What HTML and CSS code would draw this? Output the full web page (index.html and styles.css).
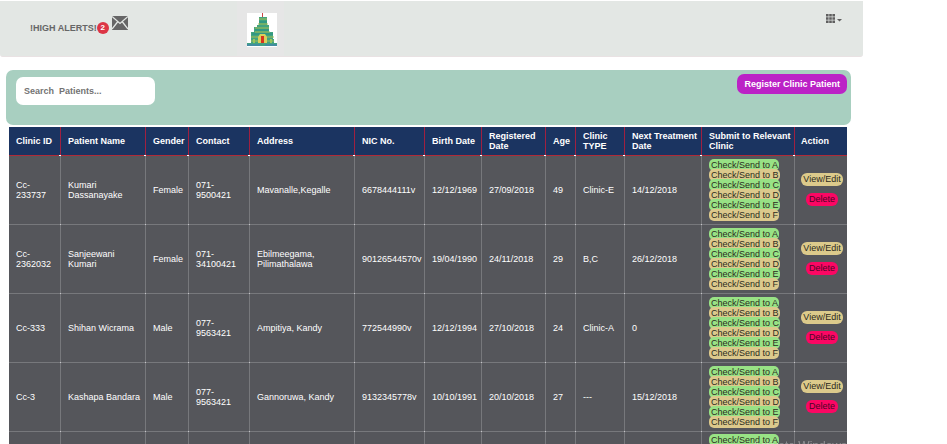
FILE: index.html
```html
<!DOCTYPE html>
<html lang="en">
<head>
<meta charset="utf-8">
<title>Clinic Patients</title>
<link rel="stylesheet" href="styles.css">
</head>
<body>
<header class="topbar">
  <a class="alerts" href="#alerts">
    <span>!HIGH ALERTS!</span><span class="badge">2</span>
    <svg class="mail" viewBox="0 0 16 14" aria-hidden="true">
      <path d="M0 0H16V14H0Z" fill="#666"/>
      <path d="M0 .5L8 7.5L16 .5M0 13L5.5 6M16 13L10.5 6" fill="none" stroke="#e3e7e4" stroke-width="1.3"/>
    </svg>
  </a>
  <a class="logo" href="#home" aria-label="Home">
    <svg viewBox="0 0 30 34" aria-hidden="true">
      <path d="M0 0H30V34H0Z" fill="#fff"/>
      <path d="M15 0H16V4H15Z" fill="#c44"/>
      <path d="M12 4H20V12H22V19H26V26H27V30H30V33H0V30H4V19H7V14H10V12H12Z" fill="#43a380"/>
      <path d="M12 6H20M11 11H21M8 15H22M8 19H23M4 24H27M4 28H27" stroke="#a5bd52" fill="none"/>
      <path d="M12 9H20M8 17H22M5 21H26" stroke="#238d87" fill="none"/>
      <path d="M11 30V24L13 21H18L20 24V30Z" fill="#d8d05b"/>
      <path d="M14 23H17V30H14Z" fill="#d9341d"/>
      <path d="M6 26H8V30H6ZM23 26H25V30H23Z" fill="#9ac55b"/>
      <path d="M0 31H13V33H0ZM18 31H30V33H18Z" fill="#438da0"/>
    </svg>
  </a>
  <button class="apps" type="button" aria-label="Apps">
    <svg viewBox="0 0 17 9" aria-hidden="true">
      <path d="M0 0H2.6V2.6H0ZM3.2 0H5.8V2.6H3.2ZM6.4 0H9V2.6H6.4ZM0 3.2H2.6V5.8H0ZM3.2 3.2H5.8V5.8H3.2ZM6.4 3.2H9V5.8H6.4ZM0 6.4H2.6V9H0ZM3.2 6.4H5.8V9H3.2ZM6.4 6.4H9V9H6.4ZM11 5H16L13.5 7.5Z" fill="#5f5f5f"/>
    </svg>
  </button>
</header>
<main>
  <section class="panel">
    <input class="search" type="text" placeholder="Search  Patients..." aria-label="Search patients">
    <button class="register" type="button">Register Clinic Patient</button>
  </section>
  <table class="patients">
    <colgroup>
      <col class="c-id"><col class="c-name"><col class="c-gender"><col class="c-contact"><col class="c-address"><col class="c-nic"><col class="c-birth"><col class="c-reg"><col class="c-age"><col class="c-type"><col class="c-next"><col class="c-submit"><col class="c-action">
    </colgroup>
    <thead>
      <tr><th>Clinic ID</th><th>Patient Name</th><th>Gender</th><th>Contact</th><th>Address</th><th>NIC No.</th><th>Birth Date</th><th>Registered Date</th><th>Age</th><th>Clinic TYPE</th><th>Next Treatment Date</th><th>Submit to Relevant Clinic</th><th>Action</th></tr>
    </thead>
    <tbody>
      <tr><td>Cc-<br>233737</td><td>Kumari Dassanayake</td><td>Female</td><td>071-<br>9500421</td><td>Mavanalle,Kegalle</td><td>6678444111v</td><td>12/12/1969</td><td>27/09/2018</td><td>49</td><td>Clinic-E</td><td>14/12/2018</td>
        <td><div class="chips"><button type="button">Check/Send to A</button><button type="button">Check/Send to B</button><button type="button">Check/Send to C</button><button type="button">Check/Send to D</button><button type="button">Check/Send to E</button><button type="button">Check/Send to F</button></div></td>
        <td><div class="actions"><button class="edit" type="button">View/Edit</button><button class="delete" type="button">Delete</button></div></td></tr>
      <tr><td>Cc-<br>2362032</td><td>Sanjeewani Kumari</td><td>Female</td><td>071-<br>34100421</td><td>Ebilmeegama, Pilimathalawa</td><td>90126544570v</td><td>19/04/1990</td><td>24/11/2018</td><td>29</td><td>B,C</td><td>26/12/2018</td>
        <td><div class="chips"><button type="button">Check/Send to A</button><button type="button">Check/Send to B</button><button type="button">Check/Send to C</button><button type="button">Check/Send to D</button><button type="button">Check/Send to E</button><button type="button">Check/Send to F</button></div></td>
        <td><div class="actions"><button class="edit" type="button">View/Edit</button><button class="delete" type="button">Delete</button></div></td></tr>
      <tr><td>Cc-333</td><td>Shihan Wicrama</td><td>Male</td><td>077-<br>9563421</td><td>Ampitiya, Kandy</td><td>772544990v</td><td>12/12/1994</td><td>27/10/2018</td><td>24</td><td>Clinic-A</td><td>0</td>
        <td><div class="chips"><button type="button">Check/Send to A</button><button type="button">Check/Send to B</button><button type="button">Check/Send to C</button><button type="button">Check/Send to D</button><button type="button">Check/Send to E</button><button type="button">Check/Send to F</button></div></td>
        <td><div class="actions"><button class="edit" type="button">View/Edit</button><button class="delete" type="button">Delete</button></div></td></tr>
      <tr><td>Cc-3</td><td>Kashapa Bandara</td><td>Male</td><td>077-<br>9563421</td><td>Gannoruwa, Kandy</td><td>9132345778v</td><td>10/10/1991</td><td>20/10/2018</td><td>27</td><td>---</td><td>15/12/2018</td>
        <td><div class="chips"><button type="button">Check/Send to A</button><button type="button">Check/Send to B</button><button type="button">Check/Send to C</button><button type="button">Check/Send to D</button><button type="button">Check/Send to E</button><button type="button">Check/Send to F</button></div></td>
        <td><div class="actions"><button class="edit" type="button">View/Edit</button><button class="delete" type="button">Delete</button></div></td></tr>
      <tr><td></td><td></td><td></td><td></td><td></td><td></td><td></td><td></td><td></td><td></td><td></td>
        <td><div class="chips"><button type="button">Check/Send to A</button></div></td>
        <td></td></tr>
    </tbody>
  </table>
</main>
<div class="watermark">Activate Windows</div>
</body>
</html>
```
FILE: styles.css
```css
* { box-sizing: border-box; }
html { scrollbar-width: none; }
body {
  margin: 0;
  background: #fff;
  font-family: "Liberation Sans", Arial, sans-serif;
  font-size: 9px;
  line-height: 10px;
}
button, input { font: inherit; border: 0; margin: 0; }
button { cursor: pointer; white-space: nowrap; }

.topbar {
  display: grid;
  grid-template-columns: 207px 47px 1fr;
  align-items: start;
  height: 56px;
  margin: 1px 84px 0 0;
  padding: 0 20px 0 30px;
  background: #e3e7e4;
  border-bottom: 1px solid #e9e2e3;
  border-radius: 0 0 3px 3px;
}
.alerts {
  display: flex;
  align-items: center;
  margin-top: 15px;
  height: 23px;
  color: #666;
  font-weight: bold;
  text-decoration: none;
}
.badge {
  width: 12px;
  height: 12px;
  border-radius: 50%;
  background: #dc3545;
  color: #fff;
  font-size: 8px;
  line-height: 12px;
  text-align: center;
}
.mail { width: 16px; height: 14px; margin-left: 3px; align-self: flex-start; }
.logo { padding: 12px 8px 8px 10px; height: 55px; background: #e6e6e6; }
.logo svg { display: block; width: 30px; height: 34px; }
.apps {
  justify-self: end;
  margin-top: 13px;
  padding: 0;
  background: none;
}
.apps svg { display: block; width: 17px; height: 9px; }

main { margin: 13px 96px 0 6px; }
.panel {
  display: flex;
  justify-content: space-between;
  align-items: flex-start;
  height: 55px;
  padding: 4px 4px 0 10px;
  border-radius: 7px;
  background: #a8cfc0;
}
.search {
  width: 139px;
  height: 28px;
  margin-top: 3px;
  padding: 0 8px;
  border-radius: 7px;
  background: #fff;
  font-weight: bold;
}
.search::placeholder { color: #737373; opacity: 1; }
.register {
  height: 20px;
  padding: 0 7px;
  border-radius: 7px;
  background: #bb22c6;
  color: #fff;
  font-weight: bold;
}

.patients {
  table-layout: fixed;
  width: calc(100% - 7px);
  margin: 2px 4px 0 3px;
  border-collapse: separate;
  border-spacing: 0;
  color: #fff;
}
.c-id, .c-action { width: 52px; }
.c-name { width: 85px; }
.c-gender { width: 43px; }
.c-contact { width: 61px; }
.c-address { width: 105px; }
.c-nic { width: 70px; }
.c-birth { width: 57px; }
.c-reg { width: 64px; }
.c-age { width: 30px; }
.c-type { width: 49px; }
.c-next { width: 77px; }
.c-submit { width: 93px; }

th, td {
  position: relative;
  padding: 0 2px 0 7px;
  text-align: left;
  vertical-align: middle;
}
th {
  height: 29px;
  background: #1b3461;
  border-right: 1px solid #a02040;
  border-bottom: 1px solid #b02a38;
}
td {
  height: 69px;
  padding-bottom: 1px;
  background: #55565b;
  border-right: 1px solid #77787c;
  border-bottom: 1px solid #77787c;
}
th:last-child, td:last-child { padding-left: 6px; border-right: 0; }
td:last-child { padding-right: 4px; }
th:not(:last-child)::after, td:not(:last-child)::after {
  content: "";
  position: absolute;
  right: -1px;
  bottom: -1px;
  width: 1px;
  height: 1px;
  background: #c4c4c8;
}
th:not(:last-child)::after { width: 2px; background: #fff; }

.chips { display: flex; flex-direction: column; align-items: flex-start; }
.chips button {
  height: 12px;
  margin-bottom: -2px;
  padding: 0 1px 0 2px;
  border-radius: 5px;
  background: #dcc98c;
  color: #2b2b20;
  line-height: 12px;
}
.chips button:last-child { margin-bottom: 0; }
.chips button:nth-child(odd) { background: #98e285; }
tr:last-child td { vertical-align: top; padding-top: 2px; }

.actions { display: flex; flex-direction: column; align-items: center; gap: 7px; }
.actions button {
  height: 13px;
  padding: 0 2px;
  border-radius: 6px;
  line-height: 13px;
  color: #2b2b20;
}
.actions .edit { background: #dcca8b; }
.actions .delete { padding: 0 3px; background: #fb0763; color: #4c0526; }

.watermark {
  position: fixed;
  right: 100px;
  bottom: -9px;
  font-size: 12px;
  line-height: 14px;
  color: rgba(255, 255, 255, 0.35);
  pointer-events: none;
}
```
